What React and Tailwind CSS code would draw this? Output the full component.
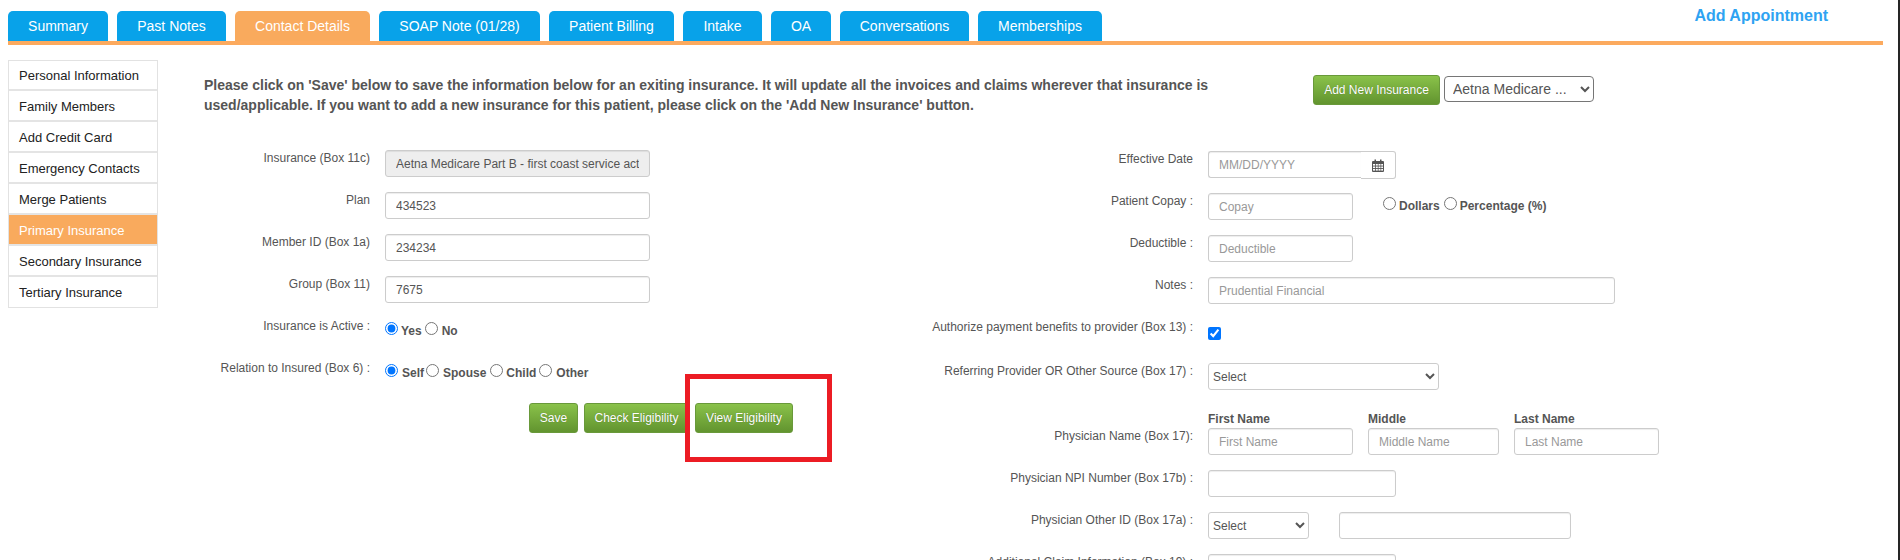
import React from "react";

const tabs = [
  ["Summary", "w-[100px]"],
  ["Past Notes", "w-[109px]"],
  ["Contact Details", "w-[135px]"],
  ["SOAP Note (01/28)", "w-[161px]"],
  ["Patient Billing", "w-[125px]"],
  ["Intake", "w-[79px]"],
  ["OA", "w-[60px]"],
  ["Conversations", "w-[129px]"],
  ["Memberships", "w-[124px]"],
];
const side = [
  "Personal Information",
  "Family Members",
  "Add Credit Card",
  "Emergency Contacts",
  "Merge Patients",
  "Primary Insurance",
  "Secondary Insurance",
  "Tertiary Insurance",
];

function Calendar() {
  return (
    <svg width="12" height="13" viewBox="0 0 12 13" className="text-[#555]">
      <path fill="currentColor" d="M1 2h1.5V0.5h1.5V2h4V0.5h1.5V2H11a1 1 0 0 1 1 1v9a1 1 0 0 1-1 1H1a1 1 0 0 1-1-1V3a1 1 0 0 1 1-1z" />
      <g fill="#fff">
        <rect x="1" y="5" width="2" height="1.6" /><rect x="3.8" y="5" width="2" height="1.6" /><rect x="6.5" y="5" width="2" height="1.6" /><rect x="9.2" y="5" width="1.8" height="1.6" />
        <rect x="1" y="7.5" width="2" height="1.6" /><rect x="3.8" y="7.5" width="2" height="1.6" /><rect x="6.5" y="7.5" width="2" height="1.6" /><rect x="9.2" y="7.5" width="1.8" height="1.6" />
        <rect x="1" y="10" width="2" height="1.6" /><rect x="3.8" y="10" width="2" height="1.6" /><rect x="6.5" y="10" width="2" height="1.6" /><rect x="9.2" y="10" width="1.8" height="1.6" />
      </g>
    </svg>
  );
}

function Field({ className = "", value, placeholder, disabled }) {
  return (
    <input
      readOnly
      defaultValue={value}
      placeholder={placeholder}
      disabled={disabled}
      className={`h-[27px] rounded-[3px] border border-[#ccc] px-[10px] text-[12px] text-[#555] placeholder:text-[#999] shadow-[inset_0_1px_1px_rgba(0,0,0,0.075)] outline-none ${disabled ? "bg-[#eee]" : "bg-white"} ${className}`}
    />
  );
}

function GreenButton({ children, className = "" }) {
  return (
    <button className={`h-[30px] rounded-[3px] border border-[#69993a] bg-gradient-to-b from-[#8ac24a] to-[#62942f] text-[12px] text-white [text-shadow:0_0_1px_rgba(0,0,0,0.3)] ${className}`}>
      {children}
    </button>
  );
}

function Label({ children, className = "" }) {
  return <div className={`text-right text-[12px] leading-[16px] text-[#555] ${className}`}>{children}</div>;
}

function Radio({ name, checked, label, textClass = "" }) {
  return (
    <span className="flex items-start">
      <input type="radio" name={name} defaultChecked={checked} className="mt-[4px] h-[13px] w-[13px]" />
      <span className={`mt-[6px] text-[12px] leading-[14px] font-bold text-[#555] ${textClass}`}>{label}</span>
    </span>
  );
}

function NativeSelect({ className = "", children }) {
  return (
    <select defaultValue="a" className={`h-[27px] appearance-auto rounded-[3px] border border-[#ccc] bg-white text-[12px] text-[#555] ${className}`}>
      {children}
    </select>
  );
}

function LeftRow({ label, children, className = "" }) {
  return (
    <div className={`flex h-[27px] gap-[15px] ${className}`}>
      <Label className="w-[166px]">{label}</Label>
      {children}
    </div>
  );
}

function RightRow({ label, children, className = "" }) {
  return (
    <div className={`flex h-[27px] gap-[15px] ${className}`}>
      <Label className="w-[393px]">{label}</Label>
      {children}
    </div>
  );
}

export default function App() {
  return (
    <div className="relative h-[560px] w-[1900px] overflow-hidden border-r-2 border-[#252525] bg-white font-['Liberation_Sans',Arial,sans-serif]">
      <div className="ml-[8px] mr-[15px] flex h-[45px] items-start justify-between border-b-4 border-[#fcaa5e] pt-[11px]">
        <div className="flex gap-[9px]">
          {tabs.map(([t, w]) => (
            <div
              key={t}
              className={`flex h-[30px] items-center justify-center rounded-t-[5px] text-[14px] text-white ${w} ${t === "Contact Details" ? "bg-[#f9aa5d]" : "bg-[#08a2e9]"}`}
            >
              {t}
            </div>
          ))}
        </div>
        <div className="mr-[55px] mt-[-5px] text-[16px] leading-[20px] font-bold text-[#2ea3f2]">Add Appointment</div>
      </div>

      <div className="ml-[8px] mt-[15px] flex">
        <div className="w-[150px] shrink-0 self-start border border-[#e2e2e2]">
          {side.map((s) => (
            <div
              key={s}
              className={`flex h-[31px] items-center border-b-2 border-[#e4e4e4] pl-[10px] pt-[2px] text-[13px] first:h-[30px] last:h-[30px] last:border-b-0 ${s === "Primary Insurance" ? "bg-[#f9aa5d] text-white" : "text-[#222]"}`}
            >
              {s}
            </div>
          ))}
        </div>

        <div className="ml-[46px] flex-1">
          <div className="flex items-start pt-[15px]">
            <p className="w-[1109px] pr-[90px] text-[14px] leading-[20px] font-bold text-[#555]">
              Please click on 'Save' below to save the information below for an exiting insurance. It will update all the invoices and claims wherever that insurance is used/applicable. If you want to add a new insurance for this patient, please click on the 'Add New Insurance' button.
            </p>
            <GreenButton className="w-[127px] shrink-0">Add New Insurance</GreenButton>
            <select defaultValue="a" className="ml-[4px] mt-[1px] h-[26px] w-[150px] rounded-[4px] border border-[#767676] bg-white pl-[4px] text-[14px] text-[#555]">
              <option value="a">Aetna Medicare ...</option>
            </select>
          </div>

          <div className="mt-[35px] flex items-start">
            {/* left column */}
            <div className="flex w-[596px] shrink-0 flex-col gap-[15px]">
              <LeftRow label="Insurance (Box 11c)">
                <Field disabled className="w-[265px]" value="Aetna Medicare Part B - first coast service act" />
              </LeftRow>
              <LeftRow label="Plan"><Field className="w-[265px]" value="434523" /></LeftRow>
              <LeftRow label="Member ID (Box 1a)"><Field className="w-[265px]" value="234234" /></LeftRow>
              <LeftRow label="Group (Box 11)"><Field className="w-[265px]" value="7675" /></LeftRow>
              <LeftRow label="Insurance is Active :">
                <div className="flex gap-[3px]">
                  <Radio name="active" checked label="Yes" textClass="ml-[3px]" />
                  <Radio name="active" label="No" textClass="ml-[4px]" />
                </div>
              </LeftRow>
              <LeftRow label="Relation to Insured (Box 6) :">
                <div className="flex">
                  <Radio name="rel" checked label="Self" textClass="ml-[4px]" />
                  <span className="ml-[2px]"><Radio name="rel" label="Spouse" textClass="ml-[4px]" /></span>
                  <span className="ml-[4px]"><Radio name="rel" label="Child" textClass="ml-[3px]" /></span>
                  <span className="ml-[3px]"><Radio name="rel" label="Other" textClass="ml-[4px]" /></span>
                </div>
              </LeftRow>
              <div className="ml-[325px] mt-[1px] flex">
                <GreenButton className="w-[49px]">Save</GreenButton>
                <GreenButton className="ml-[6px] w-[105px]">Check Eligibility</GreenButton>
                <GreenButton className="ml-[6px] w-[98px]">View Eligibility</GreenButton>
              </div>
            </div>

            {/* right column */}
            <div className="mt-[1px] flex flex-col">
              <RightRow label="Effective Date">
                <div className="flex">
                  <Field className="w-[153px] rounded-r-none border-r-0" placeholder="MM/DD/YYYY" />
                  <div className="flex h-[28px] w-[35px] items-center justify-center rounded-r-[3px] border border-l-0 border-[#ccc] bg-white">
                    <Calendar />
                  </div>
                </div>
              </RightRow>
              <RightRow label="Patient Copay :" className="mt-[15px]">
                <Field className="w-[145px]" placeholder="Copay" />
                <div className="ml-[15px] flex gap-[4px]">
                  <Radio name="copay" label="Dollars" textClass="ml-[3px]" />
                  <Radio name="copay" label="Percentage (%)" textClass="ml-[3px]" />
                </div>
              </RightRow>
              <RightRow label="Deductible :" className="mt-[15px]"><Field className="w-[145px]" placeholder="Deductible" /></RightRow>
              <RightRow label="Notes :" className="mt-[15px]"><Field className="w-[407px]" placeholder="Prudential Financial" /></RightRow>
              <RightRow label="Authorize payment benefits to provider (Box 13) :" className="mt-[15px]">
                <input type="checkbox" defaultChecked className="mt-[8px] h-[13px] w-[13px]" />
              </RightRow>
              <RightRow label="Referring Provider OR Other Source (Box 17) :" className="mt-[17px]">
                <NativeSelect className="w-[231px]"><option value="a">Select</option></NativeSelect>
              </RightRow>
              <RightRow label="Physician Name (Box 17):" className="mt-[38px]">
                <div className="relative flex gap-[15px]">
                  <div className="relative">
                    <div className="absolute top-[-17px] left-0 text-[12px] leading-[16px] font-bold text-[#555]">First Name</div>
                    <Field className="w-[145px]" placeholder="First Name" />
                  </div>
                  <div className="relative">
                    <div className="absolute top-[-17px] left-0 text-[12px] leading-[16px] font-bold text-[#555]">Middle</div>
                    <Field className="w-[131px]" placeholder="Middle Name" />
                  </div>
                  <div className="relative">
                    <div className="absolute top-[-17px] left-0 text-[12px] leading-[16px] font-bold text-[#555]">Last Name</div>
                    <Field className="w-[145px]" placeholder="Last Name" />
                  </div>
                </div>
              </RightRow>
              <RightRow label="Physician NPI Number (Box 17b) :" className="mt-[15px]"><Field className="w-[188px]" /></RightRow>
              <RightRow label="Physician Other ID (Box 17a) :" className="mt-[15px]">
                <NativeSelect className="w-[101px]"><option value="a">Select</option></NativeSelect>
                <Field className="ml-[15px] w-[232px]" />
              </RightRow>
              <RightRow label="Additional Claim Information (Box 19) :" className="mt-[15px]"><Field className="w-[188px]" /></RightRow>
            </div>
          </div>
        </div>
      </div>

      <div className="pointer-events-none absolute left-[685px] top-[374px] z-20 h-[88px] w-[147px] border-[5px] border-[#ec1c24]" />
    </div>
  );
}
